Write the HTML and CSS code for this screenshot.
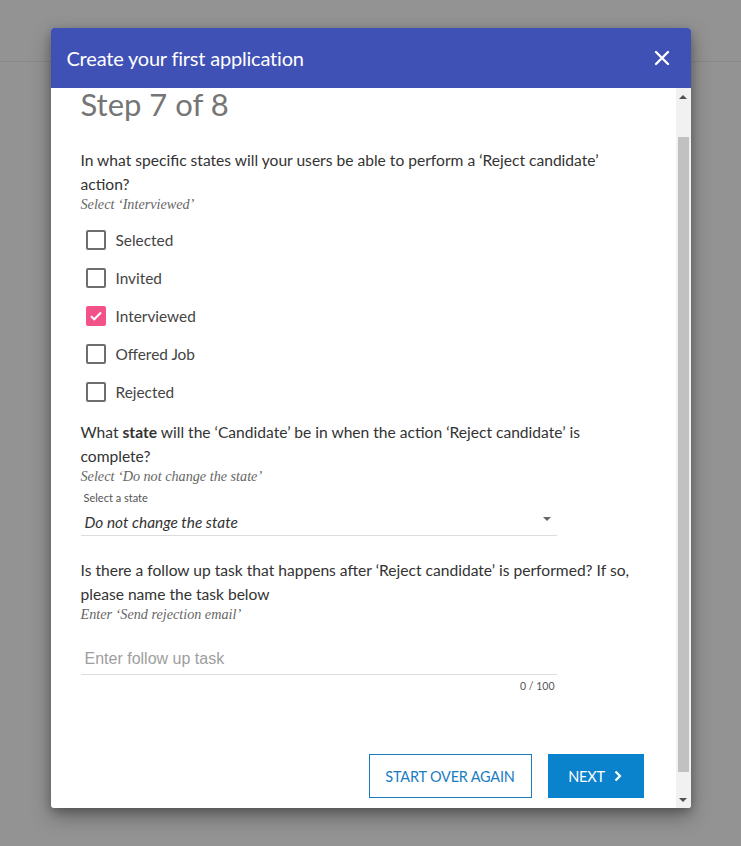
FILE: index.html
```html
<!DOCTYPE html>
<html lang="en">
<head>
<meta charset="utf-8">
<title>Create your first application</title>
<link rel="stylesheet" href="styles.css">
</head>
<body>
<div class="page-line"></div>
<div class="modal">
  <div class="modal-header">
    <span class="modal-title">Create your first application</span>
    <svg class="close" width="16" height="16" viewBox="0 0 16 16"><path d="M2 2 L14 14 M14 2 L2 14" stroke="#fff" stroke-width="2.4" stroke-linecap="round"/></svg>
  </div>
  <div class="modal-body">
    <div class="content">
      <h1 class="step">Step 7 of 8</h1>
      <p class="question">In what specific states will your users be able to perform a ‘Reject candidate’ action?</p>
      <p class="hint">Select ‘Interviewed’</p>
      <ul class="checks">
        <li class="check"><span class="box"></span>Selected</li>
        <li class="check"><span class="box"></span>Invited</li>
        <li class="check"><span class="box checked"><svg width="16" height="16" viewBox="0 0 16 16"><path d="M3 8.2 L6.3 11.3 L13 4.5" fill="none" stroke="#fff" stroke-width="2"/></svg></span>Interviewed</li>
        <li class="check"><span class="box"></span>Offered Job</li>
        <li class="check"><span class="box"></span>Rejected</li>
      </ul>
      <p class="question q2">What <b>state</b> will the ‘Candidate’ be in when the action ‘Reject candidate’ is complete?</p>
      <p class="hint">Select ‘Do not change the state’</p>
      <div class="select">
        <div class="select-label">Select a state</div>
        <div class="select-value"><span>Do not change the state</span><span class="caret"></span></div>
      </div>
      <p class="question q3">Is there a follow up task that happens after ‘Reject candidate’ is performed? If so, please name the task below</p>
      <p class="hint">Enter ‘Send rejection email’</p>
      <div class="field">
        <div class="field-input">Enter follow up task</div>
        <div class="counter">0 / 100</div>
      </div>
      <div class="actions">
        <button class="btn btn-outline">START OVER AGAIN</button>
        <button class="btn btn-primary">NEXT <svg width="10" height="12" viewBox="0 0 10 12"><path d="M2.5 1.5 L7 6 L2.5 10.5" fill="none" stroke="#fff" stroke-width="2.2"/></svg></button>
      </div>
    </div>
    <div class="scrollbar">
      <div class="arrow up"></div>
      <div class="track"><div class="thumb"></div></div>
      <div class="arrow down"></div>
    </div>
  </div>
</div>
</body>
</html>
```

FILE: styles.css
```css
html, body {
  margin: 0;
  padding: 0;
}
body {
  width: 741px;
  height: 846px;
  background: #939393;
  overflow: hidden;
  font-family: Lato, "Open Sans", sans-serif;
  position: relative;
}
.page-line {
  position: absolute;
  left: 0;
  right: 0;
  top: 61px;
  height: 1px;
  background: #888;
}
.modal {
  position: relative;
  margin: 28px auto 0;
  width: 640px;
  height: 780px;
  background: #fff;
  border-radius: 3px;
  box-shadow: 0 8px 20px rgba(0,0,0,0.35), 0 3px 8px rgba(0,0,0,0.2);
  display: flex;
  flex-direction: column;
  overflow: hidden;
}
.modal-header {
  height: 60px;
  flex: none;
  background: #3f51b5;
  display: flex;
  align-items: center;
  justify-content: space-between;
  padding: 0 21px 0 16px;
}
.modal-title {
  color: #fff;
  font-size: 20px;
  letter-spacing: -0.2px;
}
.close {
  display: block;
}
.modal-body {
  flex: 1;
  display: flex;
  min-height: 0;
}
.content {
  flex: 1;
  padding: 0 32px 0 30px;
  overflow: hidden;
}
.step {
  margin: -2px 0 0;
  font-size: 31px;
  font-weight: 400;
  line-height: 36px;
  color: #757575;
}
.question {
  margin: 26px 0 0;
  font-size: 15.6px;
  line-height: 24px;
  color: #333;
}
.question b {
  font-weight: 700;
}
.q2 {
  margin-top: 9px;
}
.q3 {
  margin-top: 22px;
}
.hint {
  margin: 0;
  font-family: "Liberation Serif", serif;
  font-style: italic;
  font-size: 14.2px;
  line-height: 16px;
  color: #666;
}
.checks {
  list-style: none;
  margin: 9px 0 0;
  padding: 0;
}
.check {
  height: 38px;
  display: flex;
  align-items: center;
  font-size: 15.4px;
  color: #444;
  padding-left: 5px;
}
.box {
  width: 20px;
  height: 20px;
  box-sizing: border-box;
  border: 2px solid #6e6e6e;
  border-radius: 2px;
  margin-right: 10px;
  display: flex;
  align-items: center;
  justify-content: center;
}
.box.checked {
  background: #f25289;
  border-color: #f25289;
}
.select {
  width: 476px;
  margin-top: 7px;
}
.select-label {
  font-size: 11px;
  line-height: 14px;
  color: #555;
  padding-left: 3px;
}
.select-value {
  height: 31px;
  box-sizing: border-box;
  border-bottom: 1px solid #ddd;
  display: flex;
  align-items: center;
  justify-content: space-between;
  padding: 4px 6px 0 4px;
  font-size: 15.4px;
  font-style: italic;
  color: #333;
}
.caret {
  width: 0;
  height: 0;
  border-left: 4px solid transparent;
  border-right: 4px solid transparent;
  border-top: 4px solid #666;
  margin-top: -6px;
}
.field {
  width: 476px;
  margin-top: 23px;
}
.field-input {
  height: 30px;
  box-sizing: border-box;
  border-bottom: 1px solid #ddd;
  font-family: "Liberation Sans", Arial, sans-serif;
  font-size: 16px;
  line-height: 28px;
  color: #9e9e9e;
  padding-left: 4px;
}
.counter {
  text-align: right;
  font-size: 10.5px;
  line-height: 14px;
  color: #555;
  margin-top: 4px;
  padding-right: 2px;
}
.actions {
  display: flex;
  justify-content: flex-end;
  gap: 16px;
  margin-top: 61px;
}
.btn {
  height: 44px;
  box-sizing: border-box;
  font-family: Lato, sans-serif;
  font-size: 14.5px;
  letter-spacing: -0.2px;
  border-radius: 0;
  display: flex;
  align-items: center;
  justify-content: center;
  gap: 8px;
  cursor: pointer;
}
.btn-outline {
  width: 163px;
  background: #fff;
  color: #1a7dbf;
  border: 1px solid #1a7dbf;
}
.btn-primary {
  width: 96px;
  background: #0b82cc;
  color: #fff;
  border: none;
}
.scrollbar {
  width: 15px;
  flex: none;
  background: #f1f1f1;
  display: flex;
  flex-direction: column;
}
.arrow {
  height: 17px;
  flex: none;
  display: flex;
  align-items: center;
  justify-content: center;
}
.arrow::before {
  content: "";
  width: 0;
  height: 0;
  border-left: 4px solid transparent;
  border-right: 4px solid transparent;
}
.arrow.up::before {
  border-bottom: 4px solid #505050;
}
.arrow.down::before {
  border-top: 4px solid #505050;
}
.track {
  flex: 1;
  padding: 32px 2px 0;
}
.thumb {
  height: 635px;
  background: #c1c1c1;
}
```
